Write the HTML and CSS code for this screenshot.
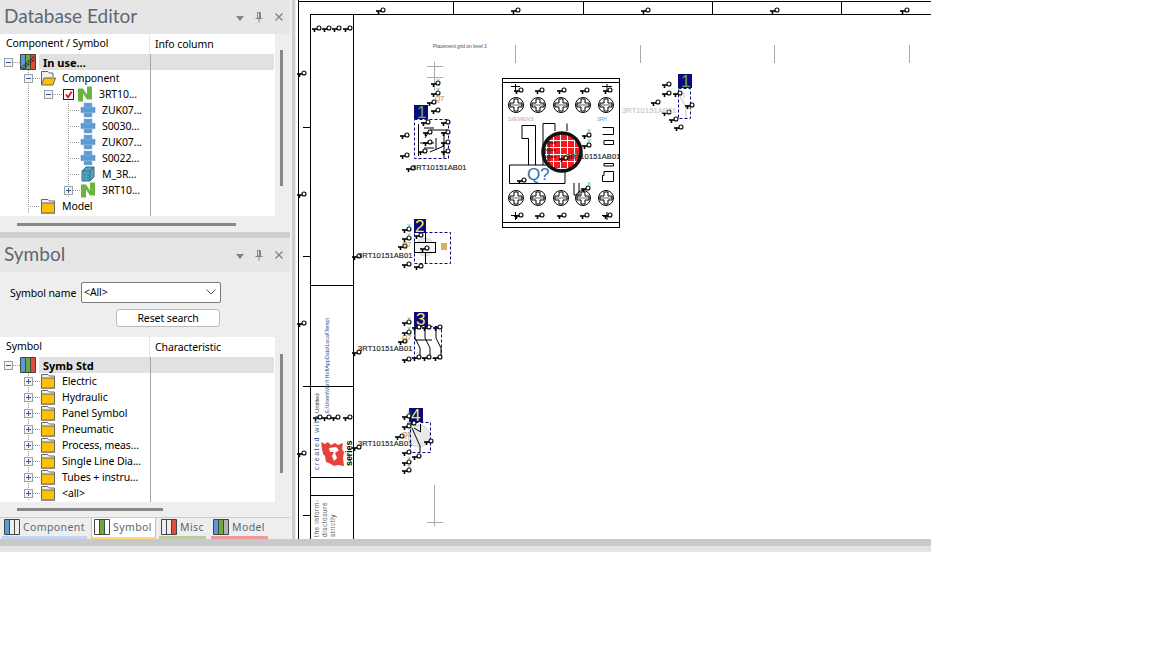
FILE: index.html
```html
<!DOCTYPE html>
<html lang="en">
<head>
<meta charset="utf-8">
<title>Database Editor</title>
<link rel="stylesheet" href="styles.css">
</head>
<body>
<svg class="sprites" width="0" height="0" aria-hidden="true">
  <defs>
    <symbol id="folder" viewBox="0 0 16 16"><path d="M1.500 15V1.500H8L9.500 3H14.500V15Z" fill="#f0f0f0" stroke="#666"/><rect x="1.500" y="5" width="13" height="10" fill="#ffc000" stroke="#666"/></symbol>
    <symbol id="folder-open" viewBox="0 0 16 16"><path d="M1.500 15V1.500H8L9.500 3H13V7" fill="#f0f0f0" stroke="#666"/><path d="M1.500 15L4 8H15.500L13 15Z" fill="#ffc000" stroke="#666"/></symbol>
    <symbol id="inuse" viewBox="0 0 16 16"><rect x=".5" y=".5" width="5" height="15" fill="#5b9bd5"/><rect x="5.500" y=".5" width="5" height="15" fill="#6fa83f"/><rect x="10.500" y=".5" width="5" height="15" fill="#e04b3c"/><path d="M.5.5H15.500V15.500H.5ZM5.500.5V15.500M10.500.5V15.500" fill="none" stroke="#444"/><path d="M1 14L15 2M3 15L15 5" stroke="#333" stroke-width="1.500" stroke-dasharray="2 1"/></symbol>
    <symbol id="std" viewBox="0 0 16 16"><rect x=".5" y=".5" width="5" height="15" fill="#5b9bd5"/><rect x="5.500" y=".5" width="5" height="15" fill="#6fa83f"/><rect x="10.500" y=".5" width="5" height="15" fill="#e04b3c"/><path d="M.5.5H15.500V15.500H.5ZM5.500.5V15.500M10.500.5V15.500" fill="none" stroke="#444"/></symbol>
    <symbol id="en" viewBox="0 0 16 16"><path d="M1 15.500V2.500H6L10 8.500V.5H15V13.500H10L6 7.500V15.500Z" fill="#6db33f"/></symbol>
    <symbol id="part" viewBox="0 0 16 16"><rect x="4" y="1" width="8" height="4" fill="#5b9bd5" stroke="#8db4dc" stroke-width=".5"/><rect x="1" y="5.500" width="14" height="5" fill="#5b9bd5" stroke="#4a80b8" stroke-width=".5"/><rect x="4" y="11" width="8" height="4" fill="#5b9bd5" stroke="#8db4dc" stroke-width=".5"/></symbol>
    <symbol id="model" viewBox="0 0 16 16"><path d="M2 5L6 1H14V11L10 15H2Z" fill="#4ea6c4" stroke="#41687c"/><path d="M2 5H10V15M10 5L14 1" fill="none" stroke="#41687c"/><path d="M5 8v1.500M8 8v1.500M5 11v1.500M8 11v1.500" stroke="#1d5a75"/></symbol>
    <symbol id="tab-c" viewBox="0 0 16 16"><rect x=".5" y=".5" width="5" height="15" fill="#5b9bd5"/><path d="M.5.5H15.500V15.500H.5ZM5.500.5V15.500M10.500.5V15.500" fill="none" stroke="#444"/></symbol>
    <symbol id="tab-s" viewBox="0 0 16 16"><rect x="5.500" y=".5" width="5" height="15" fill="#6fa83f"/><path d="M.5.5H15.500V15.500H.5ZM5.500.5V15.500M10.500.5V15.500" fill="none" stroke="#444"/></symbol>
    <symbol id="tab-m" viewBox="0 0 16 16"><rect x="10.500" y=".5" width="5" height="15" fill="#e04b3c"/><path d="M.5.5H15.500V15.500H.5ZM5.500.5V15.500M10.500.5V15.500" fill="none" stroke="#444"/></symbol>
    <symbol id="tab-d" viewBox="0 0 16 16"><rect x=".5" y=".5" width="5" height="15" fill="#5b9bd5"/><rect x="5.500" y=".5" width="5" height="15" fill="#6fa83f"/><rect x="10.500" y=".5" width="5" height="15" fill="#a9b4bd"/><path d="M.5.5H15.500V15.500H.5ZM5.500.5V15.500M10.500.5V15.500" fill="none" stroke="#444"/></symbol>
    <symbol id="pin" viewBox="0 0 8 11"><path d="M2.500.5H5.500V6H2.500ZM.5 6.500H7.500M4 7V10.500" fill="none" stroke="#7a8490"/><path d="M4.500 1V6" stroke="#7a8490"/></symbol>
    <symbol id="close" viewBox="0 0 8 8"><path d="M.5.5L7.500 7.500M7.500.5L.5 7.500" fill="none" stroke="#7a8490" stroke-width="1.300"/></symbol>
    <g id="k"><path d="M-7 1H-1.500" stroke="#000" stroke-width="1.600"/><path d="M-4.500 1V4" stroke="#000" stroke-width="1.600"/><circle cx="0" cy="0" r="2" fill="#fff" stroke="#000" stroke-width="1.100"/></g>
    <g id="screw"><circle r="7.500" fill="#fff" stroke="#000"/><path d="M-6-2H-2V-6H2V-2H6V2H2V6H-2V2H-6Z" fill="none" stroke="#000"/><path d="M-7 0H7" stroke="#000" stroke-width=".6"/></g>
    <pattern id="grid" width="7" height="7" patternUnits="userSpaceOnUse"><rect width="7" height="7" fill="#f01c20"/><path d="M.5 0V7M0 .5H7" stroke="#fff"/></pattern>
  </defs>
</svg>

<div class="app">
  <div class="main">
    <aside class="side">
      <section class="pane pane-db">
        <header class="title"><h2>Database Editor</h2><div class="tools"><span class="tool-down"></span><svg class="tool-pin"><use href="#pin"/></svg><svg class="tool-close"><use href="#close"/></svg></div></header>
        <div class="listwrap list-db">
          <div class="list">
            <div class="head"><span class="col1">Component / Symbol</span><span class="col2">Info column</span></div>
            <div class="rows">
              <div class="row l0 sel"><span class="exp minus"></span><span class="dots"></span><svg class="ic"><use href="#inuse"/></svg><b class="label">In use...</b></div>
              <div class="row l1 v-a"><span class="exp minus"></span><span class="dots"></span><svg class="ic"><use href="#folder-open"/></svg><span class="label">Component</span></div>
              <div class="row l2 v-a"><span class="exp minus"></span><span class="dots"></span><span class="check"><svg viewBox="0 0 10 10"><path d="M2 5L4.500 8L8.500 2" fill="none" stroke="#e01020" stroke-width="2"/></svg></span><svg class="ic ic-en"><use href="#en"/></svg><span class="label">3RT10...</span></div>
              <div class="row l3 v-a v-b"><span class="dots"></span><svg class="ic"><use href="#part"/></svg><span class="label">ZUK07...</span></div>
              <div class="row l3 v-a v-b"><span class="dots"></span><svg class="ic"><use href="#part"/></svg><span class="label">S0030...</span></div>
              <div class="row l3 v-a v-b"><span class="dots"></span><svg class="ic"><use href="#part"/></svg><span class="label">ZUK07...</span></div>
              <div class="row l3 v-a v-b"><span class="dots"></span><svg class="ic"><use href="#part"/></svg><span class="label">S0022...</span></div>
              <div class="row l3 v-a v-b"><span class="dots"></span><svg class="ic"><use href="#model"/></svg><span class="label">M_3R...</span></div>
              <div class="row l4 v-a v-b"><span class="exp plus"></span><span class="dots"></span><svg class="ic"><use href="#en"/></svg><span class="label">3RT10...</span></div>
              <div class="row l1 v-a"><span class="nexp"></span><span class="dots"></span><svg class="ic"><use href="#folder"/></svg><span class="label">Model</span></div>
            </div>
          </div>
          <div class="gutter gutter-db"><span class="vbar"></span></div>
        </div>
        <div class="hbar-row"><span class="hbar hbar-db"></span></div>
      </section>
      <div class="hsplit"></div>
      <section class="pane pane-sym">
        <header class="title"><h2>Symbol</h2><div class="tools"><span class="tool-down"></span><svg class="tool-pin"><use href="#pin"/></svg><svg class="tool-close"><use href="#close"/></svg></div></header>
        <div class="search">
          <div class="search-row"><label>Symbol name</label><div class="select"><span>&lt;All&gt;</span><svg width="10" height="6" viewBox="0 0 10 6"><path d="M.5.5L5 5L9.500.5" fill="none" stroke="#555"/></svg></div></div>
          <button class="reset">Reset search</button>
        </div>
        <div class="listwrap list-sym">
          <div class="list">
            <div class="head"><span class="col1">Symbol</span><span class="col2">Characteristic</span></div>
            <div class="rows">
              <div class="row l0 sel"><span class="exp minus"></span><span class="dots"></span><svg class="ic"><use href="#std"/></svg><b class="label">Symb Std</b></div>
              <div class="row l1 v-a"><span class="exp plus"></span><span class="dots"></span><svg class="ic"><use href="#folder"/></svg><span class="label">Electric</span></div>
              <div class="row l1 v-a"><span class="exp plus"></span><span class="dots"></span><svg class="ic"><use href="#folder"/></svg><span class="label">Hydraulic</span></div>
              <div class="row l1 v-a"><span class="exp plus"></span><span class="dots"></span><svg class="ic"><use href="#folder"/></svg><span class="label">Panel Symbol</span></div>
              <div class="row l1 v-a"><span class="exp plus"></span><span class="dots"></span><svg class="ic"><use href="#folder"/></svg><span class="label">Pneumatic</span></div>
              <div class="row l1 v-a"><span class="exp plus"></span><span class="dots"></span><svg class="ic"><use href="#folder"/></svg><span class="label">Process, meas...</span></div>
              <div class="row l1 v-a"><span class="exp plus"></span><span class="dots"></span><svg class="ic"><use href="#folder"/></svg><span class="label">Single Line Dia...</span></div>
              <div class="row l1 v-a"><span class="exp plus"></span><span class="dots"></span><svg class="ic"><use href="#folder"/></svg><span class="label">Tubes + instru...</span></div>
              <div class="row l1 v-a"><span class="exp plus"></span><span class="dots"></span><svg class="ic"><use href="#folder"/></svg><span class="label">&lt;all&gt;</span></div>
            </div>
          </div>
          <div class="gutter gutter-sym"><span class="vbar"></span></div>
        </div>
        <div class="hbar-row hbar-row-sym"><span class="hbar hbar-sym"></span></div>
        <nav class="tabs">
          <div class="tab tab-c"><svg class="tab-ic"><use href="#tab-c"/></svg>Component</div>
          <div class="tab tab-s"><svg class="tab-ic"><use href="#tab-s"/></svg>Symbol</div>
          <div class="tab tab-m"><svg class="tab-ic"><use href="#tab-m"/></svg>Misc</div>
          <div class="tab tab-d"><svg class="tab-ic"><use href="#tab-d"/></svg>Model</div>
        </nav>
      </section>
    </aside>
    <div class="vsplit"></div>
    <div class="canvas">
      <svg class="sheet" width="635" height="539" viewBox="296 0 635 539">
        <!-- sheet frame -->
        <path class="ln" d="M298.500 0V539M298 1.500H931M310.500 14V539M310 14.500H931M353.500 14V539M453.500 1V14M583.500 1V14M712.500 1V14M841.500 1V14"/>
        <path class="ln" d="M310 285.500H353M310 386.500H353M310 477.500H353M310 495.500H353M303 127.500H310M303 256.500H310M303 386.500H310M303 515.500H310"/>
        <path class="ln-g" d="M515.500 45V63M640.500 45V63M774.500 45V63M909.500 45V63"/>
        <text class="tiny" x="433" y="47.500">Placement grid on level 3</text>
        <!-- border terminals -->
        <use href="#k" x="383" y="10"/><use href="#k" x="518" y="10"/><use href="#k" x="648" y="10"/><use href="#k" x="777" y="10"/><use href="#k" x="907" y="10"/>
        <use href="#k" x="319" y="28"/><use href="#k" x="329" y="28"/><use href="#k" x="339" y="28"/><use href="#k" x="350" y="28"/>
        <use href="#k" x="304" y="73"/><use href="#k" x="304" y="194"/><use href="#k" x="304" y="323"/><use href="#k" x="304" y="453"/>
        <use href="#k" x="320" y="417"/><use href="#k" x="329" y="417"/><use href="#k" x="338" y="417"/><use href="#k" x="350" y="417"/>
        <use href="#k" x="359" y="352"/><use href="#k" x="359" y="447"/><use href="#k" x="359" y="256"/>
        <!-- title block -->
        <text class="vt vt-blue" transform="translate(319 470) rotate(-90)">created with</text>
        <text class="vt vt-path" transform="translate(329 413) rotate(-90)">E:\Users\Van't Hof\AppData\Local\Temp\</text>
        <text class="vt vt-small" transform="translate(319 413) rotate(-90)">Untitled</text>
        <path class="logo" d="M321 442L325 444L328 442L331 445L335 443L338 445L343 443L342 449L344 452L343 458L344 466L338 465L334 466L329 463L326 462L325 456L323 454L322 449Z"/>
        <path class="logo-w" d="M329 448L336 447L339 450L335 453L337 458L334 461L332 456L334 452L330 452Z"/>
        <text class="vt vt-series" transform="translate(352 466) rotate(-90)">series</text>
        <text class="vt vt-note" transform="translate(319 537) rotate(-90)">the inform-</text>
        <text class="vt vt-note" transform="translate(327 537) rotate(-90)">disclosure</text>
        <text class="vt vt-note" transform="translate(335 537) rotate(-90)">strictly</text>

        <!-- symbol 1 -->
        <path class="ln-g" d="M434.500 62V90M427 66.500H443M427 77.500H443"/>
        <rect class="tagbox" x="414" y="105" width="14" height="14"/>
        <text class="tag tag-g" x="417" y="118">1</text>
        <rect class="dash" x="414.500" y="119.500" width="34" height="39"/>
        <path class="ln" d="M418.500 124V156M448 130H430L425 138M434 143H420M444 132V158M430 152L444 146M436 138V150M424 128H434M424 148H434"/>
        <use href="#k" x="438" y="83"/><use href="#k" x="438" y="93"/><use href="#k" x="434" y="102"/><use href="#k" x="438" y="110"/>
        <use href="#k" x="428" y="122"/><use href="#k" x="448" y="122"/><use href="#k" x="430" y="132"/><use href="#k" x="448" y="132"/><use href="#k" x="430" y="142"/><use href="#k" x="448" y="142"/><use href="#k" x="425" y="151"/><use href="#k" x="448" y="151"/>
        <use href="#k" x="407" y="135"/><use href="#k" x="407" y="155"/><use href="#k" x="413" y="168"/>
        <text class="x" x="436" y="83">X</text><text class="x" x="436" y="92">X</text><text class="lb-o" x="435" y="101">Q7</text>
        <text class="part" x="412" y="170">3RT10151AB01</text>

        <!-- device drawing -->
        <rect class="box" x="502.500" y="78.500" width="117" height="149"/>
        <path class="ln" d="M502 82.500H620M502 222.500H620"/>
        <use href="#screw" x="516" y="105"/><use href="#screw" x="538" y="105"/><use href="#screw" x="561" y="105"/><use href="#screw" x="583" y="105"/><use href="#screw" x="606" y="105"/>
        <use href="#screw" x="516" y="198"/><use href="#screw" x="538" y="198"/><use href="#screw" x="561" y="198"/><use href="#screw" x="583" y="198"/><use href="#screw" x="606" y="198"/>
        <path class="ln" d="M511 86.500H520M515.500 84V92M602 86.500H612M607 84V92M511 215.500H520M515.500 212V220M602 215.500H612M607 212V220"/>
        <path class="ln" d="M522 125.500H535.500V165M522 125.500V138.500H528.500V165M543 165V123.500H555V131M567 123.500V131M543 165H565V183.500H509.500V165H543"/>
        <path class="ln" d="M602.500 127.500H613.500V134.500H602.500M604 140.500H613.500V144.500H604ZM604 163.500H613.500V166H604ZM613.500 171.500H604V175.500H602.500V181.500H613.500Z"/>
        <path class="ln" d="M574 183V195H579V183"/>
        <text class="lt" x="508" y="121">SIEMENS</text><text class="lb-b" x="597" y="121">3RH</text>
        <circle class="lens" cx="562" cy="152" r="19"/>
        <path class="lens-grid" d="M546 143H556M546 150H556M546 157H556M549 138V166"/>
        <text class="qq" x="527" y="180">Q?</text>
        <use href="#k" x="524" y="180"/><use href="#k" x="589" y="135"/><use href="#k" x="589" y="145"/><use href="#k" x="588" y="188"/><use href="#k" x="566" y="158"/>
        <use href="#k" x="521" y="90"/><use href="#k" x="542" y="90"/><use href="#k" x="564" y="90"/><use href="#k" x="587" y="90"/><use href="#k" x="610" y="90"/>
        <use href="#k" x="521" y="215"/><use href="#k" x="542" y="215"/><use href="#k" x="564" y="215"/><use href="#k" x="587" y="215"/><use href="#k" x="610" y="215"/>
        <text class="x" x="587" y="133">X</text><text class="x" x="587" y="143">X</text><text class="x" x="587" y="186">X</text>
        <text class="part" x="566" y="159">3RT10151AB01</text>

        <!-- faded symbol -->
        <rect class="tagbox" x="678" y="74" width="14" height="14"/>
        <text class="tag tag-g" x="681" y="87">1</text>
        <rect class="dash" x="678.500" y="88.500" width="12" height="30"/>
        <path class="ln-lg" d="M680 96L686 108V118M684 92V98M686 108H692"/>
        <use href="#k" x="669" y="84"/><use href="#k" x="669" y="93"/><use href="#k" x="680" y="93"/><use href="#k" x="658" y="102"/><use href="#k" x="692" y="105"/><use href="#k" x="669" y="112"/><use href="#k" x="676" y="119"/><use href="#k" x="681" y="127"/>
        <text class="part part-l" x="622" y="113">3RT10151AB01</text>

        <!-- symbol 2 -->
        <circle class="halo" cx="425" cy="247" r="9"/>
        <rect class="tagbox" x="414" y="219" width="12" height="14"/>
        <text class="tag" x="415" y="232">2</text>
        <rect class="dash" x="414.500" y="232.500" width="36" height="31"/>
        <rect class="coil" x="414.500" y="242.500" width="21" height="10"/>
        <path class="ln" d="M425.500 233V242M425.500 253V263"/>
        <path d="M441 243H447V250H441Z" fill="#d8b060"/>
        <use href="#k" x="409" y="229"/><use href="#k" x="409" y="238"/><use href="#k" x="421" y="235"/><use href="#k" x="405" y="246"/><use href="#k" x="409" y="264"/><use href="#k" x="421" y="266"/><use href="#k" x="427" y="248"/>
        <text class="x" x="407" y="228">X</text><text class="x" x="407" y="237">X</text><text class="lb-o" x="402" y="247">Q7</text>
        <text class="part" x="358" y="258">3RT10151AB01</text>

        <!-- symbol 3 -->
        <rect class="tagbox" x="414" y="312" width="14" height="14"/>
        <text class="tag" x="416" y="325">3</text>
        <rect class="dash" x="414.500" y="326.500" width="27" height="32"/>
        <path class="ln" d="M415 327V338L420 348V358M425 327V338L430 348V358M436 327V338L441 348V358M415 340H432"/>
        <use href="#k" x="419" y="327"/><use href="#k" x="429" y="327"/><use href="#k" x="440" y="327"/><use href="#k" x="419" y="357"/><use href="#k" x="429" y="357"/><use href="#k" x="440" y="357"/>
        <use href="#k" x="409" y="322"/><use href="#k" x="409" y="332"/><use href="#k" x="405" y="341"/><use href="#k" x="409" y="359"/>
        <text class="x" x="407" y="321">X</text><text class="x" x="407" y="331">X</text><text class="lb-o" x="402" y="340">Q7</text>
        <text class="part" x="358" y="351">3RT10151AB01</text>

        <!-- symbol 4 -->
        <circle class="halo" cx="419" cy="436" r="11"/>
        <rect class="tagbox" x="409" y="408" width="14" height="14"/>
        <text class="tag" x="411" y="421">4</text>
        <rect class="dash" x="410.500" y="422.500" width="20" height="30"/>
        <path class="ln" d="M420.500 424V432L414 428M412 428L420 446V452"/>
        <use href="#k" x="414" y="423"/><use href="#k" x="431" y="441"/><use href="#k" x="419" y="456"/>
        <use href="#k" x="409" y="416"/><use href="#k" x="409" y="426"/><use href="#k" x="402" y="436"/><use href="#k" x="409" y="452"/><use href="#k" x="409" y="462"/><use href="#k" x="409" y="470"/>
        <text class="x" x="407" y="415">X</text><text class="x" x="407" y="425">X</text><text class="x" x="407" y="461">X</text><text class="x" x="407" y="469">X</text><text class="lb-o" x="402" y="437">Q7</text>
        <text class="part" x="358" y="446">3RT10151AB01</text>
        <path class="ln-g" d="M434.500 485V526M427 522.500H443"/>
      </svg>
    </div>
  </div>
  <div class="status"><div class="status-dark"></div></div>
</div>
</body>
</html>
```

FILE: styles.css
```css
* { box-sizing: border-box; }
html, body { margin: 0; padding: 0; background: #fff; }
body { font-family: "Noto Sans", "Open Sans", sans-serif; font-size: 10.500px; letter-spacing: -.1px; color: #000; }
.sprites { position: absolute; }
.app { width: 931px; display: flex; flex-direction: column; }
.main { display: flex; height: 539px; }
.side { width: 290px; display: flex; flex-direction: column; background: #eee; }
.vsplit { width: 6px; background: linear-gradient(90deg, #eee 0 2px, #ccc 2px 5px, #eee 5px); }
.canvas { width: 635px; background: #fff; overflow: hidden; }
.sheet { display: block; }
.status { height: 13px; background: #e3e3e3; }
.status-dark { height: 7px; background: #c9c9c9; }

.pane-db { height: 232px; }
.hsplit { height: 6px; background: #cfcfcf; }
.pane-sym { flex: 1; display: flex; flex-direction: column; }
.title { height: 34px; background: #e6e6e6; display: flex; align-items: center; justify-content: space-between; padding: 0 7px 0 4px; }
.title h2 { margin: 0; font-size: 19px; font-weight: 400; color: #5c6773; font-family: Lato, "Open Sans", sans-serif; line-height: 32px; height: 34px; letter-spacing: 0; }
.tools { display: flex; align-items: center; gap: 11px; }
.tool-down { width: 0; height: 0; border-left: 4.500px solid transparent; border-right: 4.500px solid transparent; border-top: 5px solid #7a8490; margin-top: 3px; }
.tool-pin { width: 8px; height: 11px; }
.tool-close { width: 8px; height: 8px; margin-left: 1px; }

.listwrap { display: flex; }
.list-db { height: 182px; }
.list-sym { height: 165px; }
.list { width: 275px; background: #fff; overflow: hidden; }
.head { height: 20px; display: flex; align-items: center; }
.col1 { width: 150px; padding-left: 6px; height: 100%; line-height: 19px; border-right: 1px solid #e6e6e6; white-space: nowrap; }
.col2 { padding-left: 5px; line-height: 19px; }
.rows { background: linear-gradient(#a6a6a6, #a6a6a6) 150px 0 / 1px 100% no-repeat; height: 100%; }
.row { height: 16px; display: flex; align-items: center; white-space: nowrap; position: relative; line-height: 15px; }
.v-a { background: repeating-linear-gradient(#999 0 1px, transparent 1px 2px) 28px 0 / 1px 100% no-repeat; }
.v-b { background: repeating-linear-gradient(#999 0 1px, transparent 1px 2px) 28px 0 / 1px 100% no-repeat, repeating-linear-gradient(#999 0 1px, transparent 1px 2px) 68px 0 / 1px 100% no-repeat; }
.sel::before { content: ""; position: absolute; left: 39px; right: 1px; top: 0; bottom: 0; background: #e1e1e1; }
.sel::after { content: ""; position: absolute; left: 150px; width: 1px; top: 0; bottom: 0; background: #a6a6a6; }
.sel > * { position: relative; z-index: 1; }
.exp { width: 9px; height: 9px; border: 1px solid #9aa0a8; background: #f4f4f4; flex: none; position: relative; }
.exp::before { content: ""; position: absolute; left: 1px; right: 1px; top: 3px; height: 1px; background: #3a5a8a; }
.plus::after { content: ""; position: absolute; top: 1px; bottom: 1px; left: 3px; width: 1px; background: #3a5a8a; }
.dots { flex: none; height: 1px; background: repeating-linear-gradient(90deg, #999 0 1px, transparent 1px 2px); }
.nexp { width: 4px; flex: none; }
.ic { width: 16px; height: 16px; flex: none; }
.ic-en { margin-left: 3px; }
.label { margin-left: 6px; }
.check { width: 11px; height: 11px; border: 1px solid #222; background: #fff; flex: none; display: block; }
.check svg { display: block; width: 9px; height: 9px; }
.l0 { padding-left: 4px; }
.l0 .dots { width: 7px; }
.l0 .label { margin-left: 7px; font-weight: 700; font-size: 11px; letter-spacing: 0; }
.l1 { padding-left: 24px; }
.l1 .dots { width: 7px; }
.l1 .nexp + .dots { width: 12px; }
.l2 { padding-left: 44px; }
.l2 .dots { width: 10px; }
.l3 { padding-left: 68px; }
.l3 .dots { width: 12px; }
.l4 { padding-left: 64px; }
.l4 .dots { width: 7px; }
.gutter { flex: 1; display: flex; flex-direction: column; align-items: center; }
.vbar { width: 3px; background: #888; display: block; }
.gutter-db { padding: 16px 0 30px; }
.gutter-db .vbar { height: 136px; margin-left: -2px; }
.gutter-sym { padding: 17px 0 29px; }
.gutter-sym .vbar { height: 119px; margin-left: -2px; }
.hbar-row { height: 16px; display: flex; align-items: center; padding-left: 17px; }
.hbar-row-sym { height: 15px; }
.hbar { height: 3px; background: #888; display: block; }
.hbar-db { width: 219px; }
.hbar-sym { width: 146px; }

.search { height: 65px; padding: 10px 0 0 10px; }
.search-row { display: flex; align-items: center; height: 21px; }
.search-row label { width: 71px; flex: none; white-space: nowrap; }
.select { width: 140px; height: 21px; border: 1px solid #7a7a7a; border-radius: 2px; background: #fff; display: flex; align-items: center; justify-content: space-between; padding: 0 4px 1px 2px; }
.reset { display: block; margin: 6px 0 0 106px; width: 104px; height: 18px; padding: 0 0 1px; border: 1px solid #bdbdbd; border-radius: 3px; background: #fff; font: inherit; letter-spacing: -.1px; color: #000; }

.tabs { display: flex; border-top: 1px solid #ccc; height: 22px; padding-left: 2px; }
.tab { display: flex; align-items: center; gap: 3px; height: 21px; font-size: 10.500px; letter-spacing: .4px; color: #5c6773; padding: 0 1px 1px 2px; border-bottom: 3px solid; white-space: nowrap; overflow: hidden; }
.tab-ic { width: 16px; height: 16px; flex: none; }
.tab-c { width: 85px; border-color: #c5d4ee; }
.tab-s { width: 65px; margin-left: 4px; background: #fff; border: 1px solid #c0c0c0; border-top: 0; border-bottom: 3px solid #ffd878; height: 22px; }
.tab-m { width: 47px; margin-left: 3px; border-color: #bccaa2; }
.tab-d { width: 57px; margin-left: 5px; border-color: #ee9a9a; }

.ln { fill: none; stroke: #000; stroke-width: 1; }
.ln-g { fill: none; stroke: #a8a8a8; stroke-width: 1; }
.ln-lg { fill: none; stroke: #c4c4c4; stroke-width: 1; }
.tiny { font: 5px "Liberation Sans", sans-serif; fill: #555; }
.vt { font-family: "Liberation Sans", sans-serif; }
.vt-blue { font-size: 7px; letter-spacing: 1.500px; fill: #2f4f88; }
.vt-path { font-size: 5.500px; fill: #33508a; }
.vt-small { font-size: 6px; fill: #333; }
.vt-series { font-size: 9px; font-weight: 700; fill: #000; }
.vt-note { font-size: 6.500px; fill: #555; letter-spacing: .6px; }
.logo { fill: #e8433b; }
.logo-w { fill: #fff; }
.tagbox { fill: #0a0a80; }
.tag { font: 17px "Liberation Sans", sans-serif; fill: #f5f050; letter-spacing: 0; }
.tag-g { fill: #6fae40; }
.dash { fill: none; stroke: #0a0a80; stroke-width: 1; stroke-dasharray: 3 2; }
.part { font: 7.500px "Liberation Sans", sans-serif; fill: #222; letter-spacing: .1px; stroke: #222; stroke-width: .15px; }
.part-l { fill: #c8c8c8; stroke: #c8c8c8; }
.x { font: 6px "Liberation Sans", sans-serif; fill: #3ea8a0; }
.lb-o { font: 7px "Liberation Sans", sans-serif; fill: #a87a30; }
.lb-b { font: 5px "Liberation Sans", sans-serif; fill: #7a9ac0; }
.lt { font: 5.500px "Liberation Sans", sans-serif; fill: #c0a8a0; letter-spacing: .2px; }
.box { fill: #fff; stroke: #000; stroke-width: 1; }
.lens { fill: url(#grid); stroke: #111; stroke-width: 3.500; }
.lens-grid { fill: none; stroke: #222; stroke-width: 1; }
.qq { font: 17px "Liberation Sans", sans-serif; fill: #2a6fb0; }
.halo { fill: #e9e9e9; stroke: #d4d4d4; }
.coil { fill: #f4f4f4; stroke: #000; }
```
